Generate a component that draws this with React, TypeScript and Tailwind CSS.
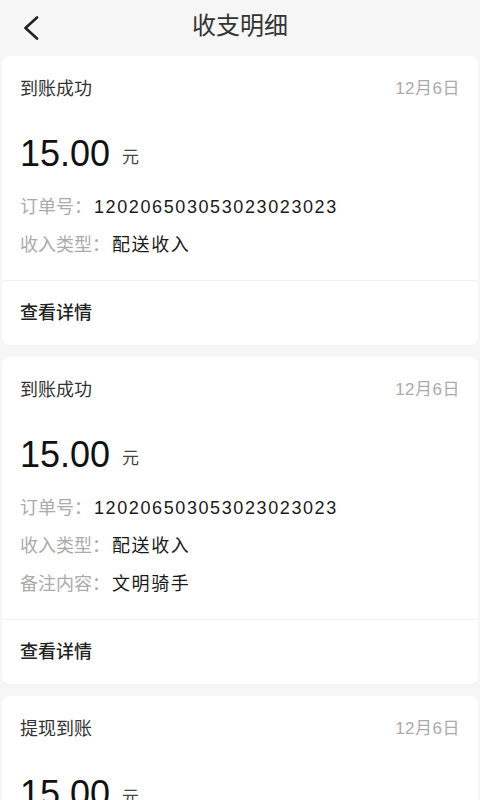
type Record = {
  title: string
  date: string
  amount: string
  rows: { label: string; value: string }[]
}

const records: Record[] = [
  {
    title: '到账成功',
    date: '12月6日',
    amount: '15.00',
    rows: [
      { label: '订单号：', value: '120206503053023023023' },
      { label: '收入类型：', value: '配送收入' },
    ],
  },
  {
    title: '到账成功',
    date: '12月6日',
    amount: '15.00',
    rows: [
      { label: '订单号：', value: '120206503053023023023' },
      { label: '收入类型：', value: '配送收入' },
      { label: '备注内容：', value: '文明骑手' },
    ],
  },
  {
    title: '提现到账',
    date: '12月6日',
    amount: '15.00',
    rows: [
      { label: '订单号：', value: '120206503053023023023' },
      { label: '收入类型：', value: '提现' },
    ],
  },
]

function RecordCard({ item }: { item: Record }) {
  return (
    <div className="mx-0.5 rounded-lg bg-white">
      <div className="px-[18px] pt-[21px] pb-[16px]">
        <div className="flex h-6 items-center justify-between">
          <span className="text-[18px] text-[#333]">{item.title}</span>
          <span className="text-[17px] tracking-[0.5px] text-[#ababab]">{item.date}</span>
        </div>
        <div className="mt-[31px] flex h-11 items-end">
          <span className="text-[36px] leading-[44px] text-[#111]">{item.amount}</span>
          <span className="mb-[6px] ml-3 text-[17px] text-[#444]">元</span>
        </div>
        <div className="mt-3">
          {item.rows.map((row) => (
            <div key={row.label} className="flex h-[38px] items-center text-[18px]">
              <span className="text-[#ababab]">{row.label}</span>
              <span className="ml-0.5 tracking-[1.6px] text-[#1a1a1a]">{row.value}</span>
            </div>
          ))}
        </div>
      </div>
      <div className="h-px bg-[#f0f0f0]" />
      <div className="flex h-16 items-center px-[18px] text-[18px] font-medium text-[#222]">
        查看详情
      </div>
    </div>
  )
}

export default function App() {
  return (
    <div
      className="min-h-screen bg-[#f6f6f6]"
      style={{ fontFamily: '"Liberation Sans", "Noto Sans CJK SC", sans-serif' }}
    >
      <div className="relative flex h-14 items-center justify-center pb-1">
        <button className="absolute left-[20px] top-[12px] p-1">
          <svg width="16" height="26" viewBox="0 0 16 26" fill="none">
            <polyline
              points="13,1.5 1.5,12 13,22.5"
              stroke="#222"
              strokeWidth="2.6"
              strokeLinecap="round"
              strokeLinejoin="round"
            />
          </svg>
        </button>
        <h1 className="text-[24px] text-[#333]">收支明细</h1>
      </div>
      <div className="flex flex-col gap-3">
        {records.map((item, i) => (
          <RecordCard key={i} item={item} />
        ))}
      </div>
    </div>
  )
}
